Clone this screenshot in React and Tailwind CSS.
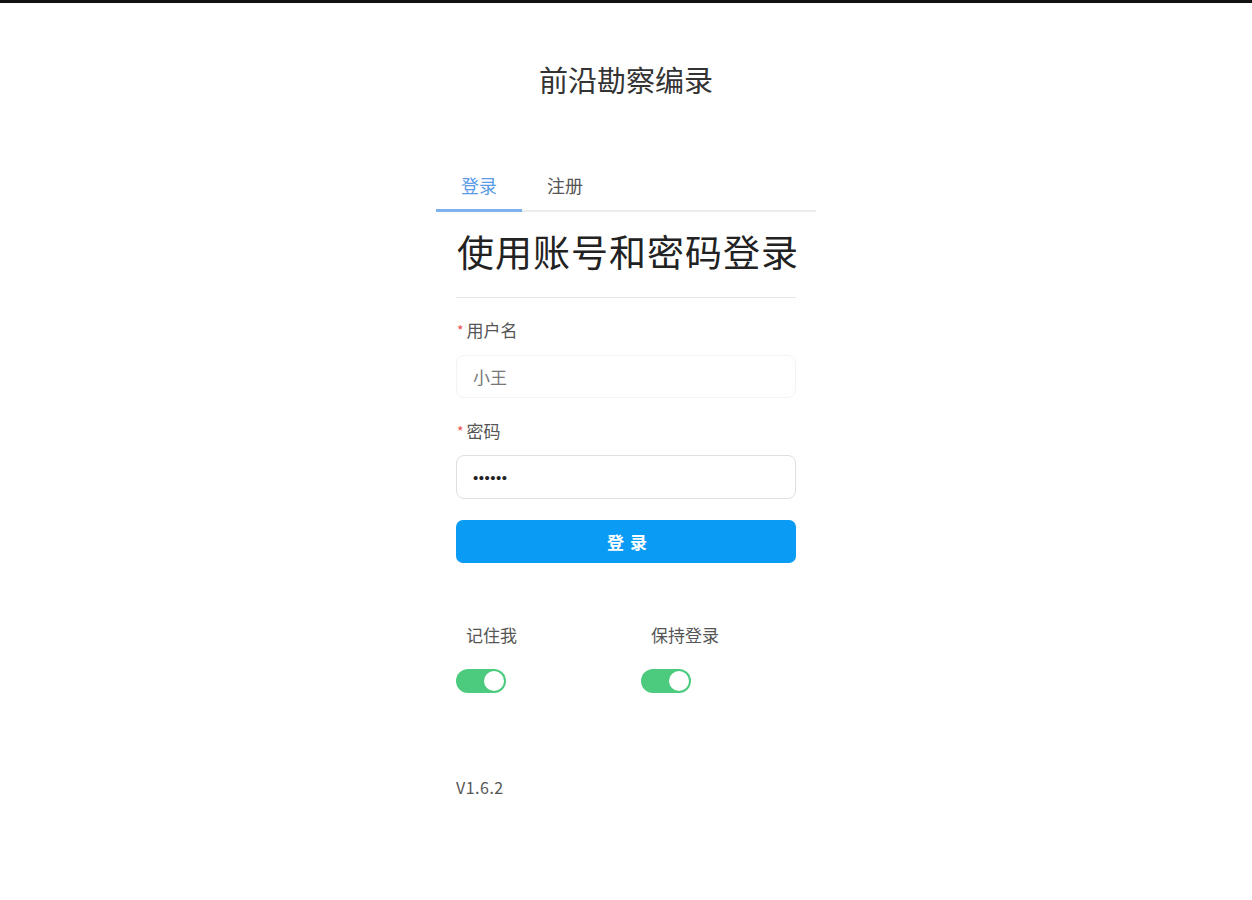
import { useState } from "react";

const font = { fontFamily: '"Noto Sans CJK SC", "Noto Sans", sans-serif' };

const Toggle = ({ on, onChange }) => (
  <button
    type="button"
    onClick={onChange}
    className={[
      "flex h-[24px] w-[50px] items-center rounded-full p-[2px] transition",
      on ? "justify-end bg-[#4ccb7e]" : "justify-start bg-[#dcdcdc]",
    ].join(" ")}
  >
    <span className="block h-[20px] w-[20px] rounded-full bg-white" />
  </button>
);

export default function App() {
  const [tab, setTab] = useState("login");
  const [remember, setRemember] = useState(true);
  const [keep, setKeep] = useState(true);

  return (
    <div className="min-h-[900px] w-full border-t-[3px] border-[#111] bg-white" style={font}>
      <div className="mx-auto flex w-[380px] flex-col">
        <h1 className="mt-[58px] text-center text-[29px] leading-[36px] text-[#333]">前沿勘察编录</h1>

        <div className="mt-[76px] flex border-b-[2px] border-[#ececec]">
          {[
            { key: "login", label: "登录" },
            { key: "signup", label: "注册" },
          ].map(({ key, label }) => (
            <button
              key={key}
              type="button"
              onClick={() => setTab(key)}
              className={[
                "-mb-[2px] w-[86px] pb-[12px] text-[18px] leading-[24px]",
                tab === key
                  ? "border-b-[3px] border-[#7fb0f0] text-[#5a9be8]"
                  : "border-b-[3px] border-transparent text-[#555]",
              ].join(" ")}
            >
              {label}
            </button>
          ))}
        </div>

        <div className="px-[20px]">
          <h2 className="mt-[15px] whitespace-nowrap border-b border-[#e6e6e6] pb-[22px] pl-[1px] text-[37px] leading-[48px] tracking-[1px] text-[#222]">
            使用账号和密码登录
          </h2>

          <label className="mt-[20px] flex items-center pl-[1px] text-[17px] leading-[24px] text-[#555]">
            <span className="mr-[3px] text-[14px] text-[#f05050]">*</span>用户名
          </label>
          <input
            defaultValue="小王"
            className="mt-[13px] h-[43px] w-full rounded-[8px] border border-[#f3f3f3] px-[16px] text-[17px] text-[#777] outline-none"
            style={font}
          />

          <label className="mt-[21px] flex items-center pl-[1px] text-[17px] leading-[24px] text-[#555]">
            <span className="mr-[3px] text-[14px] text-[#f05050]">*</span>密码
          </label>
          <input
            type="password"
            defaultValue="123456"
            autoFocus
            className="mt-[12px] h-[44px] w-full rounded-[8px] border border-[#e0e0e0] px-[16px] text-[15px] tracking-[0.5px] text-[#222] caret-[#666] outline-none"
            style={{ fontFamily: '"Liberation Sans", sans-serif' }}
          />

          <button
            type="button"
            className="mt-[21px] h-[43px] w-full rounded-[7px] bg-[#0a9cf5] pl-[8px] text-[17px] font-bold tracking-[6px] text-white"
          >
            登录
          </button>

          <div className="mt-[60px] flex">
            <div className="w-[185px]">
              <p className="pl-[10px] text-[17px] leading-[24px] text-[#555]">记住我</p>
              <div className="mt-[22px]">
                <Toggle on={remember} onChange={() => setRemember((v) => !v)} />
              </div>
            </div>
            <div>
              <p className="pl-[10px] text-[17px] leading-[24px] text-[#555]">保持登录</p>
              <div className="mt-[22px]">
                <Toggle on={keep} onChange={() => setKeep((v) => !v)} />
              </div>
            </div>
          </div>

          <p className="mt-[82px] text-[16px] leading-[24px] tracking-[0.5px] text-[#555]">V1.6.2</p>
        </div>
      </div>
    </div>
  );
}
